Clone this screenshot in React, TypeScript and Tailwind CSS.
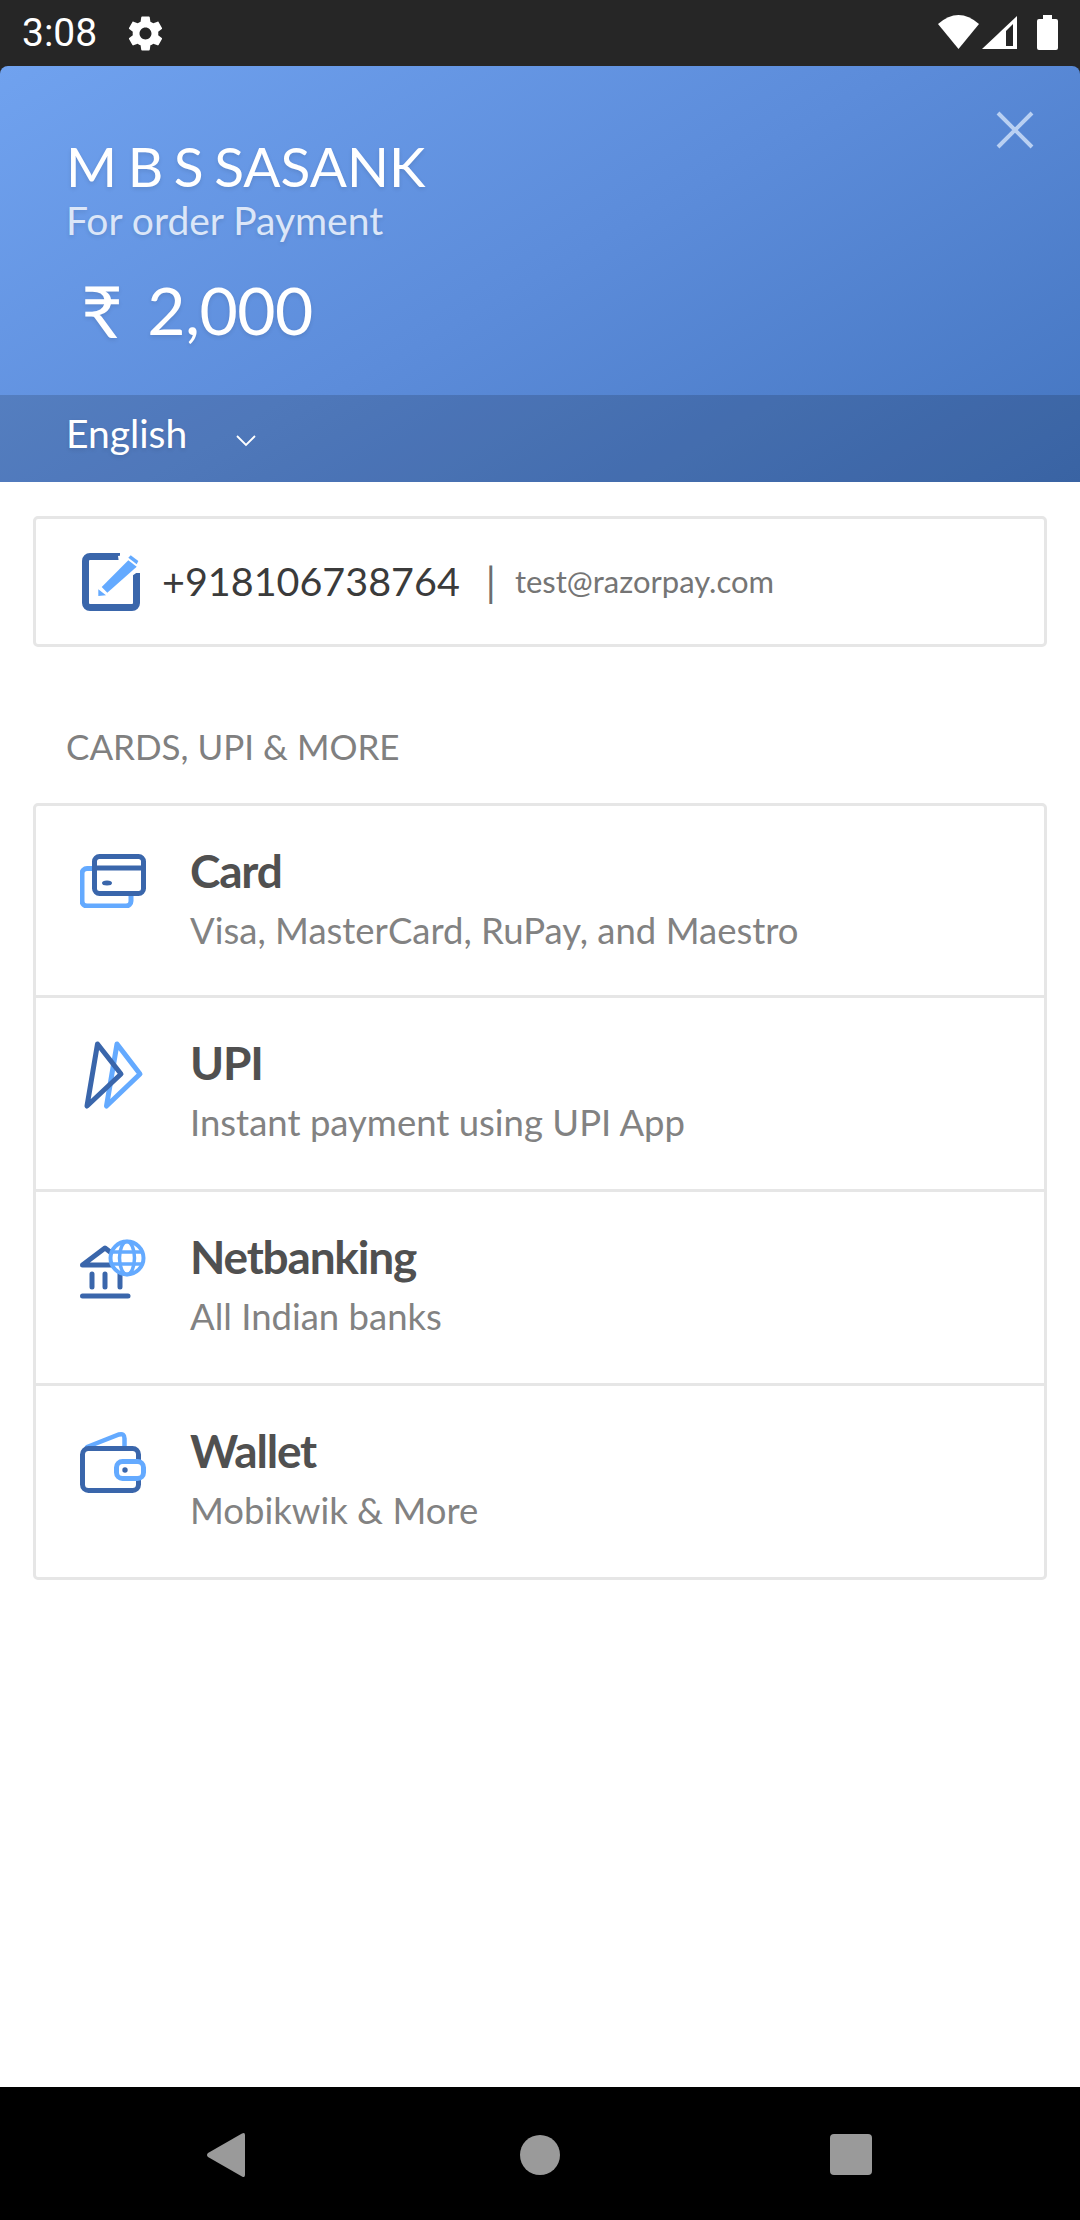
import React from "react";

const dark = "#3a66ab";
const light = "#64aaff";

function EditIcon() {
  return (
    <svg width="58" height="58" viewBox="0 0 58 58" className="shrink-0">
      <path d="M38 3.500H8A4.500 4.500 0 0 0 3.500 8v42A4.500 4.500 0 0 0 8 54.500h42a4.500 4.500 0 0 0 4.500-4.500V20" fill="none" stroke={dark} strokeWidth="7" />
      <path d="M36 3L57 0V18L40 30z" fill="#fff" />
      <path d="M46.300 7.300L54.700 13.700 25.300 39.700 19.700 34z" fill={light} />
      <path d="M16.300 36.300L24 42.300 16.300 43z" fill={light} />
      <path d="M48.700 2.300L56.300 8 54.700 11.300 46.300 4.700z" fill={light} />
    </svg>
  );
}

function CardIcon() {
  return (
    <svg width="66" height="54" viewBox="0 0 66 54" className="block">
      <path d="M14 14.500H7a5 5 0 0 0-5 5V47a5 5 0 0 0 5 5h39a5 5 0 0 0 5-5v-7" fill="none" stroke={light} strokeWidth="5" />
      <rect x="14.500" y="2.500" width="49" height="37" rx="5" fill="#fff" stroke={dark} strokeWidth="5" />
      <path d="M15 14h48" stroke={dark} strokeWidth="5" />
      <ellipse cx="27" cy="29" rx="5" ry="2.500" fill={dark} />
    </svg>
  );
}

function UpiIcon() {
  return (
    <svg width="60" height="70" viewBox="0 0 60 70" className="block">
      <path d="M33 4l23 30-33.500 32z" fill="none" stroke={light} strokeWidth="5" strokeLinejoin="round" />
      <path d="M13.500 4L37 34 3 66z" fill="none" stroke={dark} strokeWidth="5" strokeLinejoin="round" />
    </svg>
  );
}

function BankIcon() {
  return (
    <svg width="68" height="60" viewBox="0 0 68 60" className="block">
      <path d="M2.500 26L25 9 47 26z" fill="none" stroke={dark} strokeWidth="5" strokeLinejoin="round" />
      <path d="M12 35v13M25 35v13M40 35v13" stroke={dark} strokeWidth="5" strokeLinecap="round" />
      <path d="M2.500 57H48" stroke={dark} strokeWidth="5" strokeLinecap="round" />
      <circle cx="47" cy="19" r="16.500" fill="#fff" stroke={light} strokeWidth="4" />
      <ellipse cx="47" cy="19" rx="7.500" ry="16.500" fill="none" stroke={light} strokeWidth="3.500" />
      <path d="M32 13h30M32 25h30" stroke={light} strokeWidth="3.500" />
    </svg>
  );
}

function WalletIcon() {
  return (
    <svg width="68" height="63" viewBox="0 0 68 63" className="block">
      <path d="M7 16L39 3.500q5.500-1.500 5.500 4V17" fill="none" stroke={light} strokeWidth="4.500" strokeLinecap="round" />
      <rect x="2.500" y="17.500" width="56" height="42" rx="6" fill="none" stroke={dark} strokeWidth="5" />
      <rect x="36.500" y="30.500" width="27" height="17" rx="6" fill="#fff" stroke={light} strokeWidth="5" />
      <circle cx="45" cy="39" r="2.700" fill={dark} />
    </svg>
  );
}

const rows = [
  { title: "Card", sub: "Visa, MasterCard, RuPay, and Maestro", icon: <CardIcon />, rowClass: "h-[189px]", iconClass: "ml-[44px] mt-[48px] w-[110px]" },
  { title: "UPI", sub: "Instant payment using UPI App", icon: <UpiIcon />, rowClass: "h-[194px] border-t-[3px] border-[#e6e6e6]", iconClass: "ml-[48px] mt-[42px] w-[106px]" },
  { title: "Netbanking", sub: "All Indian banks", icon: <BankIcon />, rowClass: "h-[194px] border-t-[3px] border-[#e6e6e6]", iconClass: "ml-[44px] mt-[47px] w-[110px]" },
  { title: "Wallet", sub: "Mobikwik & More", icon: <WalletIcon />, rowClass: "h-[194px] border-t-[3px] border-[#e6e6e6]", iconClass: "ml-[44px] mt-[45px] w-[110px]" },
];

export default function App() {
  return (
    <div className="flex h-[2220px] w-[1080px] flex-col overflow-hidden bg-[#262626] font-['Lato','Noto_Sans',sans-serif]">
      {/* status bar */}
      <div className="flex h-[66px] shrink-0 items-center pl-[22px] pr-[20px] text-white">
        <span className="font-['Roboto',sans-serif] text-[39px] leading-none">3:08</span>
        <svg width="41" height="41" viewBox="0 0 24 24" fill="#fff" className="ml-[28px]">
          <path d="M19.430 12.980c.040-.320.070-.640.070-.980s-.030-.660-.070-.980l2.110-1.650c.190-.150.240-.420.120-.640l-2-3.460c-.120-.220-.390-.300-.610-.220l-2.490 1c-.520-.400-1.080-.730-1.690-.980l-.380-2.650C14.460 2.180 14.250 2 14 2h-4c-.250 0-.460.180-.490.420l-.380 2.650c-.610.250-1.170.590-1.690.980l-2.490-1c-.230-.090-.490 0-.610.220l-2 3.460c-.130.220-.070.490.120.640l2.110 1.650c-.040.320-.070.650-.070.980s.030.660.070.980l-2.110 1.650c-.190.150-.240.420-.120.640l2 3.460c.120.220.390.300.610.220l2.490-1c.520.400 1.080.730 1.690.980l.380 2.650c.030.240.240.420.490.420h4c.250 0 .460-.180.490-.420l.380-2.650c.610-.250 1.170-.590 1.690-.980l2.490 1c.230.090.490 0 .610-.220l2-3.460c.120-.220.070-.490-.120-.640l-2.110-1.650zM12 15.500c-1.930 0-3.500-1.570-3.500-3.500s1.570-3.500 3.500-3.500 3.500 1.570 3.500 3.500-1.570 3.500-3.500 3.500z" />
        </svg>
        <svg width="124" height="38" viewBox="0 0 124 38" className="ml-auto">
          <path d="M2 10Q22.500-8 43 10L22.500 35z" fill="#fff" />
          <path d="M46 35L81 2v33z" fill="#fff" />
          <path d="M70 32V17L77 10V32z" fill="#262626" />
          <path d="M107 5V1h9v4h4q2 0 2 2v27q0 2-2 2h-17q-2 0-2-2V7q0-2 2-2z" fill="#fff" />
        </svg>
      </div>

      {/* header */}
      <div className="relative shrink-0 rounded-t-[8px] bg-[linear-gradient(150deg,#70a2ef_0%,#5c8cda_50%,#4475c0_100%)] text-white [text-shadow:0_2px_4px_rgba(0,0,0,0.1)]">
        <div className="h-[329px] pl-[66px] pt-[69px]">
          <div className="text-[55px] leading-[62px] [word-spacing:-3.500px]">M B S SASANK</div>
          <div className="text-[39px] leading-[46px] text-[#dbe6f8]">For order Payment</div>
          <div className="mt-[29px] flex items-center pl-[15px] text-[66px] leading-[76px] tracking-[-0.500px]">
            <span className="text-[72px] leading-[76px]">₹</span>
            <span className="ml-[25px]">2,000</span>
          </div>
        </div>
        <svg width="38" height="38" viewBox="0 0 38 38" className="absolute right-[46px] top-[45px]">
          <path d="M2 2l34 34M36 2L2 36" stroke="#b9d0f2" strokeWidth="4" />
        </svg>
        <div className="flex h-[87px] items-center bg-[rgba(0,0,0,0.15)] pb-[10px] pl-[66px]">
          <span className="text-[39px] leading-none">English</span>
          <svg width="20" height="12" viewBox="0 0 20 12" className="ml-[49px] mt-[14px]">
            <path d="M1 1l9 9 9-9" fill="none" stroke="#fff" strokeWidth="1.800" />
          </svg>
        </div>
      </div>

      {/* body */}
      <div className="flex-1 bg-white px-[33px] pt-[34px]">
        <div className="flex h-[131px] items-center rounded-[5px] border-[3px] border-[#e6e6e6] pl-[46px]">
          <EditIcon />
          <span className="ml-[22px] -mt-[2px] text-[39.500px] leading-none text-[#3b3b3b]">+918106738764</span>
          <span className="ml-[26px] text-[40px] leading-none text-[#6d6d6d]">|</span>
          <span className="ml-[19px] text-[31px] leading-none text-[#757575]">test@razorpay.com</span>
        </div>

        <div className="mt-[79px] pl-[33px] text-[35px] leading-[40px] text-[#808080]">CARDS, UPI &amp; MORE</div>

        <div className="mt-[37px] rounded-[5px] border-[3px] border-[#e6e6e6]">
          {rows.map((r) => (
            <div key={r.title} className={`flex items-start ${r.rowClass}`}>
              <div className={r.iconClass}>{r.icon}</div>
              <div className="pt-[38px]">
                <div className="text-[46px] font-bold leading-[54px] tracking-[-1.200px] text-[#505050]">{r.title}</div>
                <div className="mt-[10px] text-[36.500px] leading-[44px] text-[#828282]">{r.sub}</div>
              </div>
            </div>
          ))}
        </div>
      </div>

      {/* nav bar */}
      <div className="flex h-[133px] shrink-0 items-center bg-black pl-[206px] pt-[2px]">
        <svg width="40" height="46" viewBox="0 0 40 46">
          <path d="M36 1.500Q39 0 39 3V43q0 3-3 1.500L2 25q-2-2 0-4z" fill="#9a9a9a" />
        </svg>
        <div className="ml-[274px] h-[40px] w-[40px] rounded-full bg-[#9a9a9a]" />
        <div className="ml-[270px] h-[41px] w-[42px] rounded-[4px] bg-[#9a9a9a]" />
      </div>
    </div>
  );
}
